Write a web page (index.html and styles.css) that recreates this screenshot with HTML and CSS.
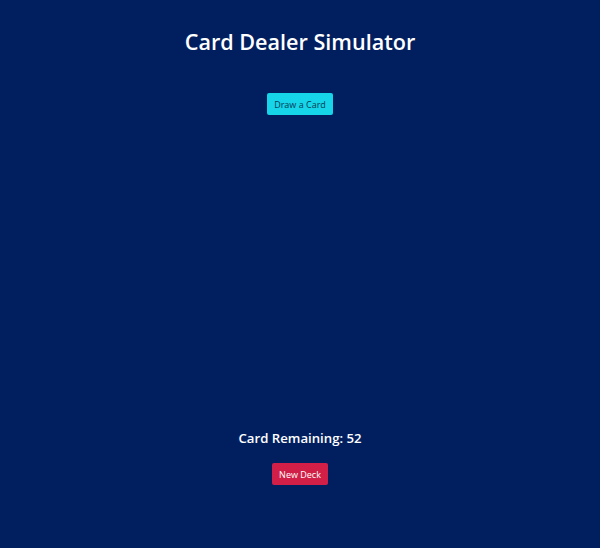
FILE: index.html
```html
<!DOCTYPE html>
<html>
<head>
<meta charset="utf-8">
<link rel="stylesheet" href="styles.css">
</head>
<body>
<div class="app">
  <h1 class="title">Card Dealer Simulator</h1>
  <button class="btn btn-draw">Draw a Card</button>
  <div class="table"></div>
  <h2 class="remaining">Card Remaining: 52</h2>
  <button class="btn btn-new">New Deck</button>
</div>
</body>
</html>
```
FILE: styles.css
```css
html, body {
  margin: 0;
  padding: 0;
  background: #011f5f;
  height: 100%;
}
.app {
  display: flex;
  flex-direction: column;
  align-items: center;
  font-family: "Open Sans", "Noto Sans", sans-serif;
  color: #fff;
}
.title {
  margin: 26px 0 0;
  font-size: 21.6px;
  font-weight: 600;
  line-height: 32px;
}
.btn {
  border: none;
  border-radius: 2px;
  font-family: "Open Sans", sans-serif;
  font-size: 9px;
  height: 22px;
  padding: 0 7px;
  cursor: pointer;
}
.btn-draw {
  margin-top: 35px;
  background: #16d5e8;
  color: #033a56;
}
.table {
  height: 311px;
}
.remaining {
  margin: 0;
  font-size: 13.2px;
  font-weight: 600;
  line-height: 24px;
}
.btn-new {
  margin-top: 13px;
  background: #d21f47;
  color: #fff;
}
```
